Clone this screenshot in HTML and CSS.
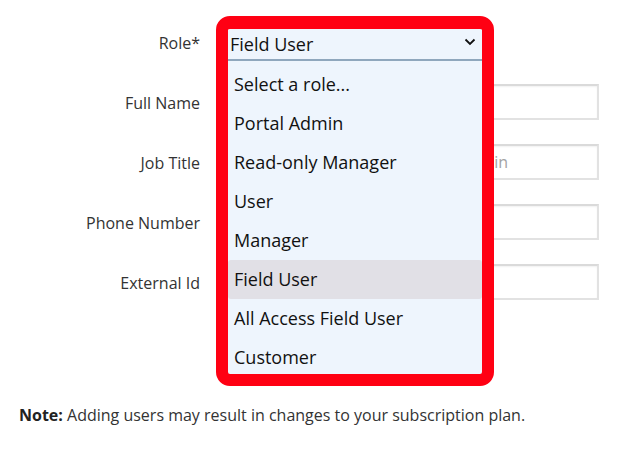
FILE: index.html
```html
<!DOCTYPE html>
<html>
<head>
<meta charset="utf-8">
<link rel="stylesheet" href="styles.css">
</head>
<body>
<div class="page">
  <form class="form">
    <div class="row">
      <label class="label">Role*</label>
      <div class="field"><div class="select-base"></div></div>
    </div>
    <div class="row">
      <label class="label">Full Name</label>
      <div class="field"><input class="input" type="text"></div>
    </div>
    <div class="row">
      <label class="label">Job Title</label>
      <div class="field"><input class="input" type="text" placeholder="e.g. Regional Sales Operations Admin"></div>
    </div>
    <div class="row">
      <label class="label">Phone Number</label>
      <div class="field"><input class="input" type="text"></div>
    </div>
    <div class="row">
      <label class="label">External Id</label>
      <div class="field"><input class="input" type="text"></div>
    </div>
  </form>
  <p class="note"><b>Note:</b> Adding users may result in changes to your subscription plan.</p>

  <div class="callout">
    <div class="sel">
      <span>Field User</span>
      <svg class="chev" width="12" height="8" viewBox="0 0 12 8"><path d="M1.5 1.5 L6 6 L10.5 1.5" fill="none" stroke="#111" stroke-width="1.8"/></svg>
    </div>
    <ul class="opts">
      <li>Select a role...</li>
      <li>Portal Admin</li>
      <li>Read-only Manager</li>
      <li>User</li>
      <li>Manager</li>
      <li class="hl">Field User</li>
      <li>All Access Field User</li>
      <li>Customer</li>
    </ul>
  </div>
</div>
</body>
</html>
```
FILE: styles.css
```css
html, body { margin: 0; padding: 0; background: #fff; }
body { font-family: "Open Sans", "Noto Sans", sans-serif; color: #333; }
.page { position: relative; width: 619px; height: 456px; overflow: hidden; }
.form { display: flex; flex-direction: column; gap: 24px; padding-top: 24px; }
.row { display: grid; grid-template-columns: 200px 381px; column-gap: 18px; align-items: center; height: 36px; }
.label { text-align: right; font-size: 16px; color: #333; margin-top: 1px; }
.field { height: 36px; }
.input { box-sizing: border-box; width: 381px; height: 36px; border: 2px solid #e2e2e2; border-top-color: #dadada; box-shadow: inset 0 1px 2px rgba(0,0,0,0.06); padding: 0 11px; font-family: inherit; font-size: 16px; color: #333; outline: none; display: block; background: #fff; }
.input::placeholder { color: #a3a3a3; }
.select-base { width: 264px; height: 36px; }
.note { margin: 0; padding: 104px 0 0 19px; font-size: 16px; color: #333; }
.note b { color: #222; }
.callout { position: absolute; left: 216px; top: 16px; width: 278px; height: 370px; box-sizing: border-box; border: 12px solid #ff0013; border-top-width: 13px; border-radius: 14px; background: #eef5fd; overflow: hidden; }
.sel { height: 30px; border-bottom: 2px solid #8fa7bd; display: flex; align-items: center; justify-content: space-between; padding: 0 6px 0 2px; font-size: 18px; color: #111; }
.chev { margin-top: -4px; }
.opts { list-style: none; margin: 0; padding: 4px 0 0; }
.opts li { height: 39px; line-height: 39px; padding: 0 6px; font-size: 18px; color: #111; border-radius: 3px; }
.opts li.hl { background: #e1e0e6; }
```
